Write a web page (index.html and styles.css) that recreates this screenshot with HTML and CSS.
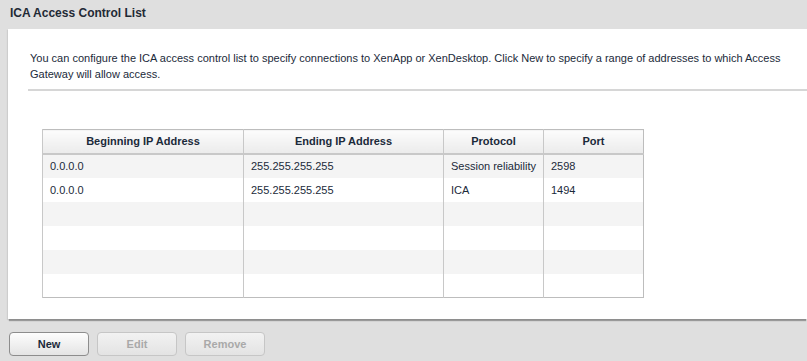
FILE: index.html
```html
<!DOCTYPE html>
<html lang="en">
<head>
    <meta charset="UTF-8" />
    <title>ICA Access Control List</title>
    <link rel="stylesheet" href="styles.css">
</head>
<body>
<div class="page">
    <h1 class="page-title">ICA Access Control List</h1>
    <section class="panel">
        <p class="intro">You can configure the ICA access control list to specify connections to XenApp or XenDesktop. Click New to specify a range of addresses to which Access Gateway will allow access.</p>
        <div class="table-wrap">
            <table class="acl-table">
                <thead>
                    <tr>
                        <th class="col-begin">Beginning IP Address</th>
                        <th class="col-end">Ending IP Address</th>
                        <th class="col-proto">Protocol</th>
                        <th class="col-port">Port</th>
                    </tr>
                </thead>
                <tbody>
                    <tr><td>0.0.0.0</td><td>255.255.255.255</td><td>Session reliability</td><td>2598</td></tr>
                    <tr><td>0.0.0.0</td><td>255.255.255.255</td><td>ICA</td><td>1494</td></tr>
                    <tr><td></td><td></td><td></td><td></td></tr>
                    <tr><td></td><td></td><td></td><td></td></tr>
                    <tr><td></td><td></td><td></td><td></td></tr>
                    <tr><td></td><td></td><td></td><td></td></tr>
                </tbody>
            </table>
        </div>
    </section>
    <div class="actions">
        <button type="button" class="btn">New</button>
        <button type="button" class="btn" disabled>Edit</button>
        <button type="button" class="btn" disabled>Remove</button>
    </div>
</div>
</body>
</html>
```

FILE: styles.css
```css
/* Base */
* {
    box-sizing: border-box;
}
body {
    margin: 0;
    background: #dfdfdf;
    font-family: Tahoma, 'Liberation Sans', Arial, sans-serif;
    font-size: 11px;
    color: #1b2a3a;
    overflow: hidden;
}
.page {
    width: 807px;
    height: 361px;
    padding-top: 5px;
}
.page-title {
    margin: 0 0 0 10px;
    height: 24px;
    font-size: 12px;
    font-weight: bold;
    color: #1f2a36;
    line-height: 16px;
}

/* Panel */
.panel {
    margin-left: 8px;
    height: 290px;
    background: #fff;
    box-shadow: -1px 1px 1px rgba(0,0,0,0.08), 0 3px 1px -1px rgba(0,0,0,0.3);
    padding-top: 21px;
}
.intro {
    margin: 0 0 0 20px;
    padding: 0 0 7px 2px;
    line-height: 16px;
    border-bottom: 2px solid #d6d6d6;
}
.table-wrap {
    padding: 38px 0 0 34px;
}

/* Table */
.acl-table {
    border-collapse: collapse;
    table-layout: fixed;
    width: 601px;
    border: 1px solid #bdbdbd;
}
.acl-table th,
.acl-table td {
    height: 24px;
    padding: 0 7px;
    border-left: 1px solid #c8c8c8;
    text-align: left;
    white-space: nowrap;
}
.acl-table th {
    text-align: center;
    font-weight: bold;
    color: #1b2a3a;
    background: linear-gradient(#fcfcfc, #ebebeb);
    border-bottom: 2px solid #c8c8c8;
}
.col-begin { width: 201px; }
.col-end { width: 200px; }
.col-proto { width: 100px; }
.col-port { width: 100px; }
.acl-table tbody tr:nth-child(odd) td {
    background: #f4f4f4;
}

/* Buttons */
.actions {
    display: flex;
    gap: 8px;
    margin: 13px 0 0 9px;
}
.btn {
    width: 80px;
    height: 24px;
    border: 1px solid #8d8d8d;
    border-radius: 4px;
    background: linear-gradient(#fdfdfd, #e4e4e4);
    font-family: Tahoma, 'Liberation Sans', Arial, sans-serif;
    font-size: 11px;
    font-weight: bold;
    color: #1b2a3a;
    padding: 0;
}
.btn:disabled {
    border-color: #c6c6c6;
    color: #a9a9a9;
    background: linear-gradient(#f2f2f2, #e3e3e3);
}
```
